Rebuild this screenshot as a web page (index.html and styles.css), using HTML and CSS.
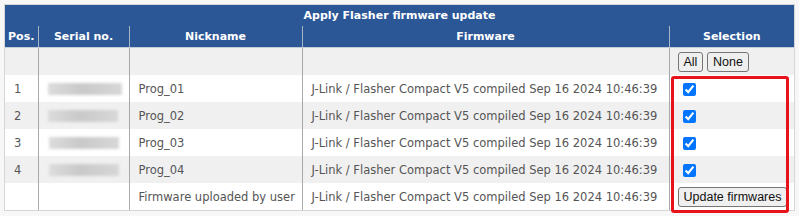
FILE: index.html
```html
<!DOCTYPE html>
<html lang="en">
<head>
    <meta charset="UTF-8">
    <title>Apply Flasher firmware update</title>
    <link rel="stylesheet" href="styles.css">
</head>
<body>

    <div class="panel">
        <table class="fw-table">
            <colgroup>
                <col class="col-pos">
                <col class="col-serial">
                <col class="col-nick">
                <col class="col-fw">
                <col class="col-sel">
            </colgroup>
            <thead>
                <tr class="title-row">
                    <th colspan="5">Apply Flasher firmware update</th>
                </tr>
                <tr class="head-row">
                    <th>Pos.</th>
                    <th>Serial no.</th>
                    <th>Nickname</th>
                    <th>Firmware</th>
                    <th>Selection</th>
                </tr>
            </thead>
            <tbody>
                <tr class="odd">
                    <td></td>
                    <td></td>
                    <td></td>
                    <td></td>
                    <td class="sel"><button class="btn">All</button> <button class="btn">None</button></td>
                </tr>
                <tr>
                    <td>1</td>
                    <td><div class="serial s1"></div></td>
                    <td>Prog_01</td>
                    <td>J-Link / Flasher Compact V5 compiled Sep 16 2024 10:46:39</td>
                    <td class="sel"><input type="checkbox" checked></td>
                </tr>
                <tr class="odd">
                    <td>2</td>
                    <td><div class="serial s2"></div></td>
                    <td>Prog_02</td>
                    <td>J-Link / Flasher Compact V5 compiled Sep 16 2024 10:46:39</td>
                    <td class="sel"><input type="checkbox" checked></td>
                </tr>
                <tr>
                    <td>3</td>
                    <td><div class="serial s3"></div></td>
                    <td>Prog_03</td>
                    <td>J-Link / Flasher Compact V5 compiled Sep 16 2024 10:46:39</td>
                    <td class="sel"><input type="checkbox" checked></td>
                </tr>
                <tr class="odd">
                    <td>4</td>
                    <td><div class="serial s4"></div></td>
                    <td>Prog_04</td>
                    <td>J-Link / Flasher Compact V5 compiled Sep 16 2024 10:46:39</td>
                    <td class="sel"><input type="checkbox" checked></td>
                </tr>
                <tr>
                    <td></td>
                    <td></td>
                    <td>Firmware uploaded by user</td>
                    <td>J-Link / Flasher Compact V5 compiled Sep 16 2024 10:46:39</td>
                    <td class="sel"><button class="btn">Update firmwares</button></td>
                </tr>
            </tbody>
        </table>
        <div class="highlight"></div>
    </div>

</body>
</html>
```

FILE: styles.css
```css
body {
    margin: 0;
    padding: 4px;
    background-color: #f7f7f7;
    font-family: 'DejaVu Sans', Verdana, sans-serif;
}

.panel {
    position: relative;
    width: 789px;
    border: 1px solid #d6d6d6;
    background: white;
}

.fw-table {
    width: 100%;
    border-collapse: collapse;
    table-layout: fixed;
    font-size: 11.5px;
    color: #555;
}

.col-pos { width: 33px; }
.col-serial { width: 91px; }
.col-nick { width: 173px; }
.col-fw { width: 367px; }
.col-sel { width: auto; }

thead th {
    background-color: #2b5797;
    color: white;
    font-weight: bold;
    font-size: 11px;
    padding: 0;
}

.title-row th {
    height: 21px;
    text-align: center;
}

.head-row th {
    height: 21px;
    border-left: 1px solid #a9b6c9;
    border-bottom: 1px solid #c4ccd8;
}

.head-row th:first-child {
    border-left: none;
}

tbody td {
    height: 27px;
    padding: 0 0 0 9px;
    border-left: 1px solid #a8a8a8;
    white-space: nowrap;
    overflow: hidden;
}

tbody td:first-child {
    border-left: none;
    padding-left: 9px;
}

tbody tr.odd td {
    background-color: #f0f0f0;
}

tbody td.sel {
    padding-left: 8px;
}

.sel input[type="checkbox"] {
    margin: 0 0 0 5px;
    width: 13px;
    height: 13px;
    vertical-align: middle;
}

.btn {
    font-family: 'Liberation Sans', Arial, sans-serif;
    font-size: 12.5px;
    color: #111;
    background-color: #efefef;
    border: 1px solid #767676;
    border-radius: 3px;
    padding: 2px 5px;
    margin: 0;
}

.serial {
    height: 12px;
    width: 74px;
    background: linear-gradient(90deg, #dcdcdc, #c9c9c9 45%, #d7d7d7);
    filter: blur(1.5px);
}

.s2 { width: 70px; }
.s3 { width: 70px; margin-left: 1px; }
.s4 { width: 70px; margin-left: 1px; }

.highlight {
    position: absolute;
    left: 666px;
    top: 71px;
    width: 112px;
    height: 131px;
    border: 3px solid #e8121a;
    border-radius: 3px;
    pointer-events: none;
}
```
